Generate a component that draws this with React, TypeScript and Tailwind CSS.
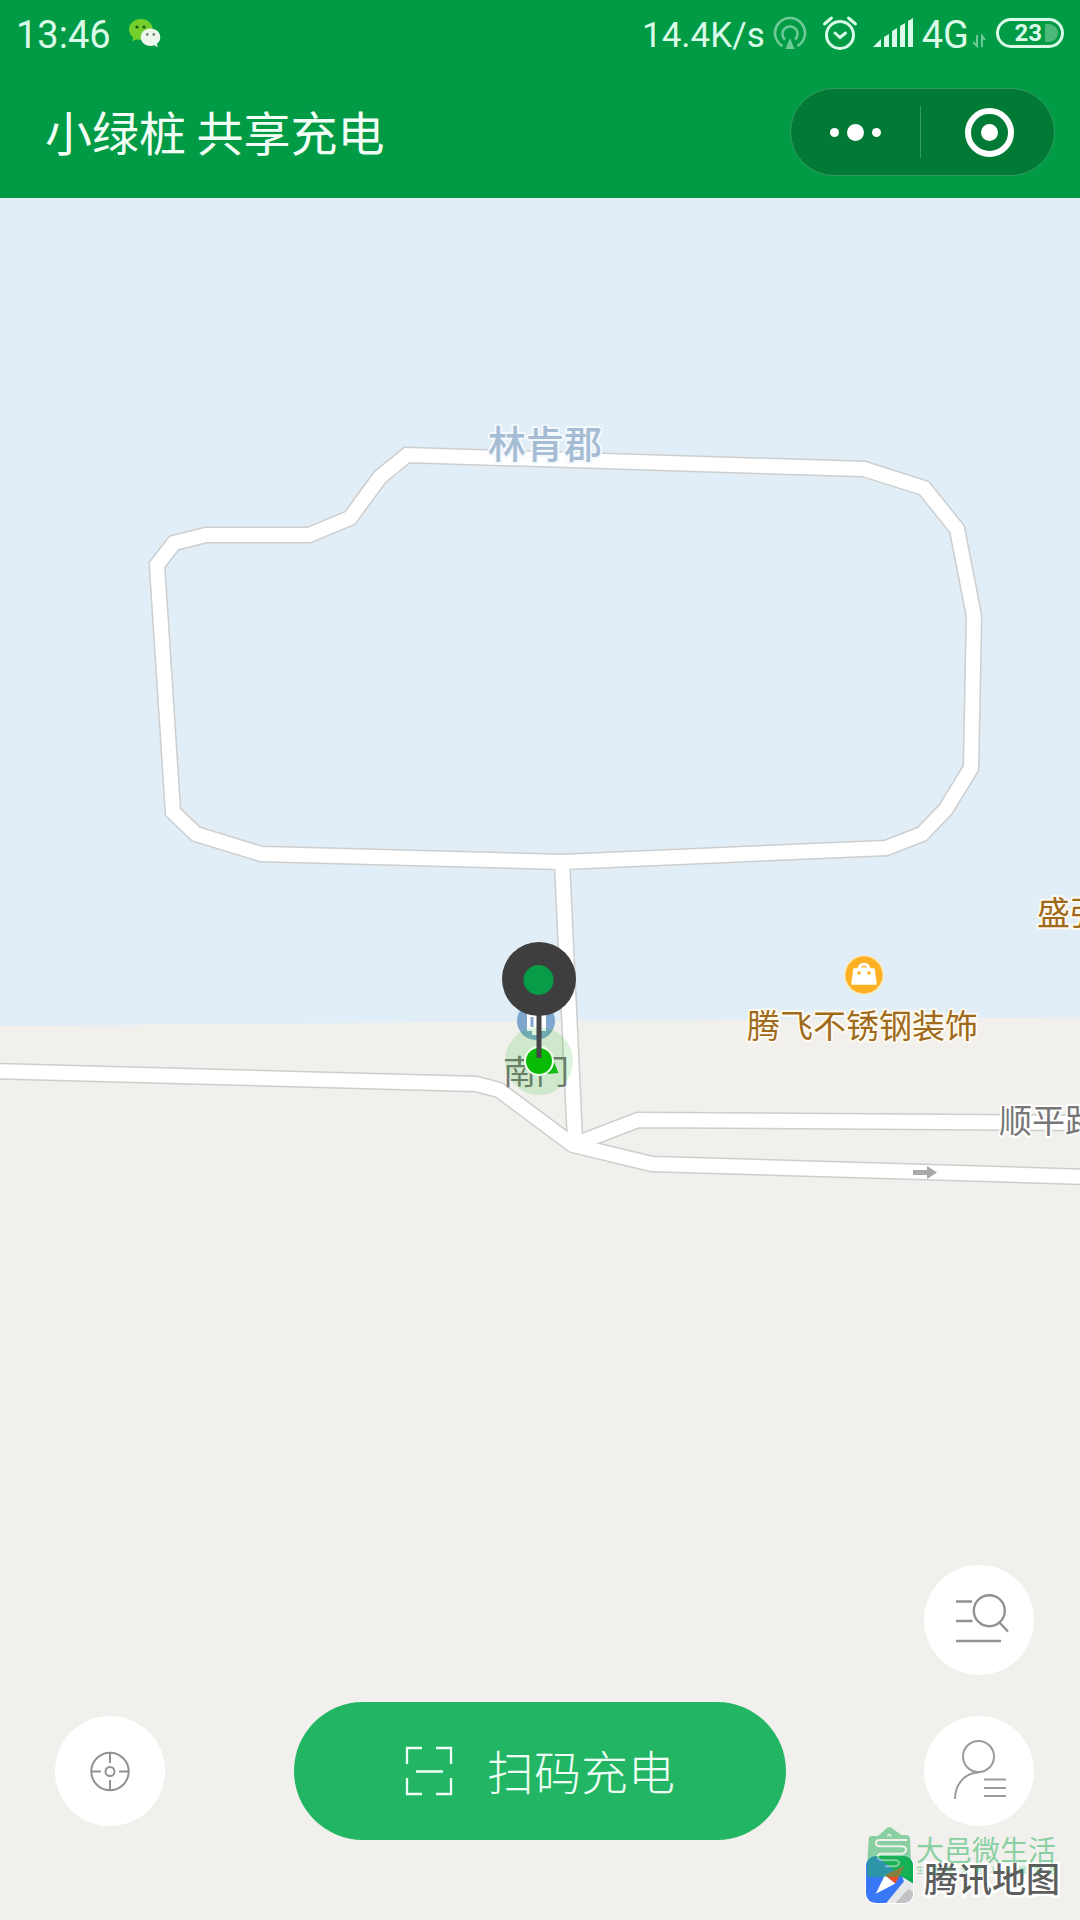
import type { ReactNode } from "react";

const roads = [
  "M157 565 L174 543 L206 535 H309 L350 518 L380 477 L407 455 L864 469 L924 488 L957 529 L974 616 L971 768 L946 809 L922 834 L886 848 L562 862 L261 854 L196 834 L173 812 Z",
  "M562 862 L575 1140",
  "M-10 1071 L476 1084 L499 1090 L573 1145 L652 1164 L1090 1177",
  "M573 1145 L638 1120 L1090 1123",
];

const labels = [
  { text: "腾飞不锈钢装饰", x: 747, y: 1038, className: "fill-[#a06a1c] stroke-[#fffaf0] text-[33px]" },
  { text: "盛弘", x: 1037, y: 925, className: "fill-[#a06a1c] stroke-[#fffaf0] text-[33px]" },
  { text: "顺平路", x: 999, y: 1133, className: "fill-[#767676] stroke-white text-[33px]" },
  { text: "林肯郡", x: 488, y: 458, className: "fill-[#a5bcd3] stroke-[#f4f9fd] text-[38px] font-medium" },
];

function StatusBar() {
  return (
    <div className="flex h-[66px] items-center justify-between px-4 pt-1 font-['Roboto'] text-[38px] leading-none text-[#d9fbe8]">
      <div className="flex items-center gap-[18px]">
        <span>13:46</span>
        <svg className="mb-1 h-[29px] w-[32px]" viewBox="0 0 32 29">
          <path
            d="M12 0C5 0 0 4.700 0 10.500c0 3.200 1.600 6 4.300 8l-1.300 4 4.400-2.300c1.400.4 3 .7 4.600.7 6.600 0 11.600-4.500 11.600-10.400S18.600 0 12 0z"
            fill="#72cf2c"
          />
          <circle cx="8" cy="8" r="1.600" fill="#1c5b16" />
          <circle cx="15" cy="8" r="1.600" fill="#1c5b16" />
          <path
            d="M21.500 9.500c-5.500 0-9.700 3.800-9.700 8.700s4.200 8.700 9.700 8.700c1.300 0 2.600-.2 3.700-.6l3.600 2-.9-3.500c2.100-1.600 3.400-3.900 3.400-6.600 0-4.900-4.300-8.700-9.800-8.700z"
            fill="#eef7ec"
          />
          <circle cx="18.300" cy="15.500" r="1.400" fill="#7b8a7b" />
          <circle cx="24.800" cy="15.500" r="1.400" fill="#7b8a7b" />
        </svg>
      </div>
      <div className="flex items-center">
        <span className="text-[35px]">14.4K/s</span>
        <svg className="mb-1 ml-2 h-[34px] w-[34px] opacity-50" viewBox="0 0 34 34" fill="none" stroke="currentColor" strokeWidth="2.600">
          <path d="M9.500 30A15 15 0 1 1 24.500 30" />
          <path d="M12 23.500A7.500 7.500 0 1 1 22 23.500" />
          <path d="M17 22L21.500 33H12.500Z" fill="currentColor" stroke="none" />
        </svg>
        <svg className="mb-1 ml-[15px] h-[36px] w-[36px]" viewBox="0 0 36 36" fill="none" stroke="currentColor" strokeWidth="3" strokeLinecap="round">
          <circle cx="18" cy="20" r="13.500" />
          <path d="M2.500 9L9.500 3M33.500 9L26.500 3M13 18L18 22.500L23.500 18" />
        </svg>
        <svg className="mb-1 ml-[15px] h-[30px] w-[41px]" viewBox="0 0 41 30" fill="currentColor">
          <path d="M0 29L8 21V29ZM11 19L16 16V29H11ZM19 13L24 10V29H19ZM27 8L32 5V29H27ZM35 3L40 0V29H35Z" />
        </svg>
        <span className="ml-2">4G</span>
        <svg className="ml-1 mt-3 h-[14px] w-[13px] opacity-50" viewBox="0 0 13 14" fill="none" stroke="currentColor" strokeWidth="2">
          <path d="M0 8L4 12V1M12 6L9 2V13" />
        </svg>
        <div className="mb-1 ml-[10px] flex h-[30px] w-[68px] items-center justify-end gap-[3px] rounded-full border-3 border-current pr-[3px]">
          <span className="text-[24px] font-bold leading-none">23</span>
          <span className="h-[18px] w-[13px] rounded-r-full bg-[#4cb97a]" />
        </div>
      </div>
    </div>
  );
}

function TitleBar() {
  return (
    <div className="flex h-[132px] items-center justify-between pl-[45px] pr-[25px]">
      <h1 className="pb-1 text-[47px] font-normal leading-none text-[#f2fff6]">小绿桩 共享充电</h1>
      <div className="flex h-[88px] w-[265px] items-center rounded-full border border-[#359b5e] bg-[#017a35]">
        <button type="button" aria-label="更多" className="flex h-full flex-1 items-center justify-center gap-2">
          <span className="size-[9px] rounded-full bg-white" />
          <span className="size-[17px] rounded-full bg-white" />
          <span className="size-[9px] rounded-full bg-white" />
        </button>
        <span className="h-[52px] w-px bg-[#359b5e]" />
        <button type="button" aria-label="关闭" className="flex h-full flex-1 items-center justify-center pl-1">
          <span className="flex size-[49px] items-center justify-center rounded-full border-6 border-white">
            <span className="size-[17px] rounded-full bg-white" />
          </span>
        </button>
      </div>
    </div>
  );
}

function MapCanvas() {
  return (
    <svg className="absolute inset-0 h-full w-full" viewBox="0 198 1080 1722" preserveAspectRatio="xMidYMid slice">
      <rect y="198" width="1080" height="1722" fill="#f1f0ec" />
      <path d="M0 198H1080V1017L480 1022L0 1026Z" fill="#e1eef7" />

      <g fill="none" stroke="#cdcecd" strokeWidth="17">
        {roads.map((d) => (
          <path key={d} d={d} />
        ))}
      </g>
      <g fill="none" stroke="#fff" strokeWidth="14">
        {roads.map((d) => (
          <path key={d} d={d} />
        ))}
      </g>
      <path d="M913 1170H927V1166L937 1172.500L927 1179V1175H913Z" fill="#a9a9a9" />

      {/* shop */}
      <circle cx="864" cy="975" r="20" fill="#fde8ba" />
      <circle cx="864" cy="975" r="18.500" fill="#fdb022" />
      <path
        d="M854 969H858C859 965 861 963.500 864 963.500S869 965 870 969H874L876 984H852Z"
        fill="#fff"
        stroke="#fff"
        strokeWidth="1.500"
        strokeLinejoin="round"
      />
      <circle cx="859" cy="973" r="1.800" fill="#fdb022" />
      <circle cx="869" cy="973" r="1.800" fill="#fdb022" />
      <path d="M861.500 967.500Q864 965 866.500 967.500" fill="none" stroke="#fdb022" strokeWidth="1.500" />

      {labels.map((l) => (
        <text key={l.text} x={l.x} y={l.y} strokeWidth="4" strokeLinejoin="round" paintOrder="stroke" className={l.className}>
          {l.text}
        </text>
      ))}

      {/* gate and current position */}
      <circle cx="536" cy="1021" r="19" fill="#7fa6cd" />
      <path d="M527 1014H546V1031H541V1035H532V1031H527Z" fill="#fff" />
      <path d="M532 1017V1027" stroke="#7fa6cd" strokeWidth="3" />
      <text x="503" y="1084" className="fill-[#747474] text-[33px]">
        南门
      </text>
      <circle cx="539" cy="1061" r="34" fill="#20b820" fillOpacity="0.160" />
      <path d="M554 1062L558.500 1073L547 1074Z" fill="#10bb10" />
      <circle cx="539" cy="1061" r="15" fill="#f4fff2" />
      <circle cx="539" cy="1061" r="13" fill="#0abb05" />

      <path d="M539 1010V1058" stroke="#454545" strokeWidth="5" />
      <circle cx="539" cy="979" r="37" fill="#3e3e3e" />
      <circle cx="538.500" cy="980" r="15" fill="#079c47" />
    </svg>
  );
}

function RoundButton({ label, children }: { label: string; children: ReactNode }) {
  return (
    <button type="button" aria-label={label} className="size-[110px] shrink-0 rounded-full bg-white text-[#929292]">
      <svg viewBox="0 0 110 110" fill="none" stroke="currentColor" strokeWidth="2.400">
        {children}
      </svg>
    </button>
  );
}

function Actions() {
  return (
    <div className="relative mt-auto flex flex-col gap-[27px] pb-20">
      <div className="flex justify-end pr-[46px]">
        <RoundButton label="搜索">
          <circle cx="65.300" cy="45.700" r="15.500" />
          <path d="M75 57L84 66.500M32 36.500H48M32 56H48.500M32 76H77" />
        </RoundButton>
      </div>
      <div className="grid grid-cols-[1fr_auto_1fr] items-center">
        <div className="flex pl-[55px]">
          <RoundButton label="定位">
            <g strokeWidth="2">
              <circle cx="55" cy="55.500" r="18.700" />
              <circle cx="55" cy="55.500" r="4.500" />
              <path d="M55 37V47M55 64V74M36.500 55.500H46M64 55.500H73.500" />
            </g>
          </RoundButton>
        </div>
        <button
          type="button"
          className="flex h-[138px] w-[492px] items-center justify-center gap-[34px] rounded-full bg-[#22b664] text-[47px] font-light leading-none text-[#effff5]"
        >
          <svg className="h-[50px] w-[48px]" viewBox="0 0 48 50" fill="none" stroke="currentColor" strokeWidth="2.300">
            <path d="M17 2H2V18M31 2H46V18M2 32V48H17M46 32V48H31M11 25.500H38" />
          </svg>
          <span className="pb-1">扫码充电</span>
        </button>
        <div className="flex justify-end pr-[46px]">
          <RoundButton label="我的">
            <g strokeWidth="2" stroke="#9b9b9b">
              <circle cx="54.500" cy="40.500" r="15.500" />
              <path d="M31 83C31 68 41 56.500 55 56.500M60 63.500H82M60 72H82M60 80H82" />
            </g>
          </RoundButton>
        </div>
      </div>
    </div>
  );
}

function Attribution() {
  return (
    <div className="absolute bottom-4 right-5 flex items-center gap-[10px]">
      <svg className="size-[49px]" viewBox="-3 -3 150 150">
        <defs>
          <clipPath id="tile">
            <rect width="144" height="144" rx="30" />
          </clipPath>
        </defs>
        <rect x="-3" y="-3" width="150" height="150" rx="33" fill="#fff" />
        <g clipPath="url(#tile)">
          <rect width="144" height="144" fill="#3878f8" />
          <path d="M30 0H144V84L118 68Z" fill="#0bb04e" />
          <path d="M112 64L144 84V144H62L116 78Z" fill="#e6e7e9" />
          <path d="M90 144L130 100L144 112V144Z" fill="#c2c2c4" />
        </g>
        <path d="M30 116L58 58L90 84Z" fill="#fff" />
        <path d="M118 30L58 58L90 84Z" fill="#ed4f1f" />
      </svg>
      <span className="pb-1 text-[34px] font-medium leading-none text-[#5d5d5d] [paint-order:stroke] [-webkit-text-stroke:5px_white]">
        腾讯地图
      </span>
    </div>
  );
}

function Watermark() {
  return (
    <div className="absolute bottom-[42px] right-[24px] flex items-center gap-1 text-[#22b25a] opacity-50">
      <svg className="h-[51px] w-[46px]" viewBox="0 0 138 153">
        <path
          d="M8 35Q8 27 18 27H36L62 4Q70-3 78 4L106 24H122Q132 26 132 38L136 140Q136 150 124 150H14Q2 150 2 140Z"
          fill="currentColor"
        />
        <path
          d="M124 39H42Q28 39 30 50Q32 58 44 58H108Q122 60 120 70Q118 80 104 80H46Q34 80 36 91Q38 100 50 100H92Q102 104 98 112Q94 118 84 118H58"
          fill="none"
          stroke="#f1f0ec"
          strokeWidth="6"
        />
        <path d="M64 28Q70 16 76 28" fill="none" stroke="#f1f0ec" strokeWidth="4" />
      </svg>
      <div className="flex flex-col pt-1">
        <span className="text-[28px] leading-[30px]">大邑微生活</span>
        <span className="flex justify-between text-[8px] leading-[12px]">
          {[..."生活在大邑人人微生活"].map((c, i) => (
            <span key={i}>{c}</span>
          ))}
        </span>
      </div>
    </div>
  );
}

export default function App() {
  return (
    <div className="flex min-h-screen flex-col overflow-hidden font-['Noto_Sans_CJK_SC',sans-serif]">
      <header className="bg-[#019a45]">
        <StatusBar />
        <TitleBar />
      </header>
      <main className="relative flex flex-1 flex-col">
        <MapCanvas />
        <Actions />
        <Attribution />
        <Watermark />
      </main>
    </div>
  );
}
